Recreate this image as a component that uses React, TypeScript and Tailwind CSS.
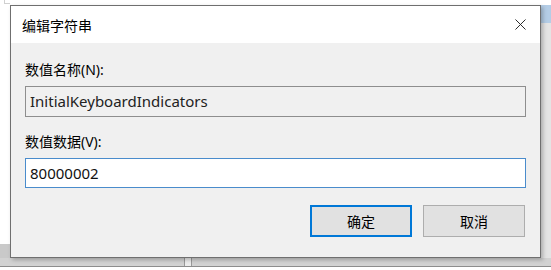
import { X } from "lucide-react";

const cjk = "font-['Segoe_UI','Noto_Sans','Noto_Sans_CJK_SC',sans-serif]";

export default function App() {
  return (
    <div className={`relative h-[270px] w-[551px] overflow-hidden bg-white ${cjk}`}>
      {/* windows behind the dialog */}
      <div className="absolute left-[4px] top-0 h-[4px] w-[6px] border-l border-b border-[#d0d0d0]" />
      <div className="absolute right-0 top-[5px] h-[253px] w-[10px] bg-[#e4e4e4]">
        <div className="h-[18px] w-full bg-[#b4cde6]" />
      </div>
      <div className="absolute left-0 top-[244px] h-[14px] w-[10px] bg-[#c9c9c9]" />
      <div className="absolute left-0 top-[258px] flex h-[9px] w-full border-b border-[#8c8c8c] bg-[#d6d6d6]">
        <div className="w-[185px] border-r border-[#9a9a9a] bg-[#d2d2d2]" />
        <div className="w-[6px] bg-[#ececec]" />
        <div className="flex-1 border-l border-[#9a9a9a] bg-[#d2d2d2]" />
      </div>

      {/* dialog */}
      <div className="relative ml-[10px] mt-[5px] flex h-[253px] w-[531px] flex-col border border-[#6f6f6f] bg-[#f0f0f0] shadow-[2px_2px_4px_rgba(0,0,0,0.25)]">
        <div className="flex h-[37px] items-center justify-between bg-white pl-[11px] pr-[10px]">
          <span className="pt-[2px] text-[14px] text-black">编辑字符串</span>
          <X size={19} strokeWidth={1.2} className="text-[#222]" />
        </div>

        <div className="flex flex-1 flex-col px-[14px]">
          <div className="mt-[17px] h-[20px] text-[14px] leading-[20px] text-black">数值名称(N):</div>
          <div className="mt-[6px] flex h-[31px] items-center border border-[#8e8e8e] bg-[#f0f0f0] px-[4px] text-[15px] text-[#222]">
            InitialKeyboardIndicators
          </div>
          <div className="mt-[15px] h-[20px] text-[14px] leading-[20px] text-black">数值数据(V):</div>
          <div className="mt-[6px] flex h-[30px] items-center border border-[#4a8ccc] bg-white px-[4px] text-[15px] text-[#111]">
            80000002
          </div>
          <div className="mt-[17px] flex justify-end gap-[11px] pr-[1px]">
            <button className="h-[32px] w-[102px] border-2 border-[#0078d7] bg-[#e1e1e1] text-[14px] text-black">
              确定
            </button>
            <button className="h-[32px] w-[102px] border border-[#adadad] bg-[#e1e1e1] text-[14px] text-black">
              取消
            </button>
          </div>
        </div>
      </div>
    </div>
  );
}
